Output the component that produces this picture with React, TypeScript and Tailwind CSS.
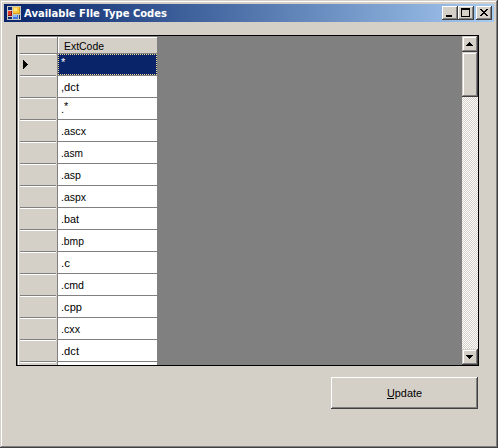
const codes = ['*', ',dct', '.*', '.ascx', '.asm', '.asp', '.aspx', '.bat', '.bmp', '.c', '.cmd', '.cpp', '.cxx', '.dct'];

const raised =
  'bg-[#d4d0c8] shadow-[inset_-1px_-1px_0_#404040,inset_1px_1px_0_#fff,inset_-2px_-2px_0_#808080]';
const scrollRaised =
  'bg-[#d4d0c8] shadow-[inset_-1px_-1px_0_#404040,inset_1px_1px_0_#d4d0c8,inset_-2px_-2px_0_#808080,inset_2px_2px_0_#fff]';

function AppIcon() {
  return (
    <svg width="16" height="16" viewBox="0 0 16 16" shapeRendering="crispEdges" className="ml-[3px]">
      <rect x="0" y="1" width="14" height="14" fill="#c8c8c4" />
      <rect x="1" y="2" width="4" height="3" fill="#102a70" />
      <rect x="1" y="6" width="4" height="5" fill="#901010" />
      <rect x="1" y="6" width="3" height="4" fill="#e03828" />
      <rect x="1" y="12" width="4" height="2" fill="#102a70" />
      <rect x="6" y="2" width="7" height="7" fill="#d99a14" />
      <rect x="6" y="2" width="6" height="6" fill="#f8c840" />
      <rect x="7" y="3" width="3" height="3" fill="#ffe47c" />
      <rect x="6" y="10" width="5" height="4" fill="#3f78dc" />
      <rect x="6" y="10" width="4" height="2" fill="#84b5fa" />
      <rect x="12" y="10" width="1" height="4" fill="#102a70" />
    </svg>
  );
}

function TitleBar() {
  return (
    <div className="flex h-[18px] items-center bg-linear-to-r from-[#0a246a] to-[#a6caf0] pr-[2px]">
      <AppIcon />
      <svg width="160" height="18" className="ml-px overflow-visible">
        <text x="0" y="13" textLength="143" lengthAdjust="spacingAndGlyphs" fill="#fff" className="font-['DejaVu_Sans',sans-serif] text-[11px] font-bold">
          Available FIle Type Codes
        </text>
      </svg>
      <div className="ml-auto flex">
        <button className={`h-[14px] w-4 ${raised}`}>
          <svg width="16" height="14" shapeRendering="crispEdges"><path d="M4 9h6v2H4z" /></svg>
        </button>
        <button className={`h-[14px] w-4 ${raised}`}>
          <svg width="16" height="14" shapeRendering="crispEdges"><path fillRule="evenodd" d="M3 2h9v9H3zM4 4v6h7V4z" /></svg>
        </button>
        <button className={`ml-[2px] h-[14px] w-4 ${raised}`}>
          <svg width="16" height="14" shapeRendering="crispEdges">
            <path d="M4 3h2v1h1v1h2V4h1V3h2v1h-1v1h-1v1H9v1h1v1h1v1h1v1h-2V9H9V8H7v1H6v1H4V9h1V8h1V7h1V6H6V5H5V4H4z" />
          </svg>
        </button>
      </div>
    </div>
  );
}

function Label({ text, width }: { text: string; width?: number }) {
  if (text.endsWith('*')) {
    return (
      <svg width="60" height="14" className="block overflow-visible">
        <text y="11" fill="currentColor">
          {text.slice(0, -1)}
          <tspan dy="-3">*</tspan>
        </text>
      </svg>
    );
  }
  return (
    <svg width="60" height="14" className="block overflow-visible">
      <text x="0" y="11" textLength={width} lengthAdjust="spacingAndGlyphs" fill="currentColor">{text}</text>
    </svg>
  );
}

const widths = [5, 18, 8, 25, 22, 20, 25, 18, 23, 9, 23, 21, 19, 18];

function Grid() {
  return (
    <div className="min-w-0 flex-1 overflow-hidden bg-[#808080]">
      <div className="flex h-[329px] w-[140px] border-t border-[#808080]">
        <div className="w-[2px] border-r border-white bg-[#808080]" />
        <div className="flex w-[38px] flex-col bg-[#d4d0c8] pl-px">
          <div className="h-[17px] shrink-0 border-b border-[#808080] shadow-[inset_0_1px_0_#fff]" />
          {codes.map((code, i) => (
            <div key={i} className="mr-px h-[22px] shrink-0 border-t border-b border-t-white border-b-[#808080]">
              {i === 0 && (
                <svg width="36" height="20" shapeRendering="crispEdges">
                  <path d="M3 5h1v1h1v1h1v1h1v1h1v1H7v1H6v1H5v1H4v1H3z" />
                </svg>
              )}
            </div>
          ))}
          <div className="mr-px h-[3px] shrink-0 border-t border-white" />
        </div>
        <div className="flex w-[100px] flex-col border-l border-[#808080] bg-white">
          <div className="h-[17px] shrink-0 border-b border-[#808080] bg-[#d4d0c8] pt-[2px] pl-[6px] shadow-[inset_1px_1px_0_#fff]">
            <Label text="ExtCode" width={40} />
          </div>
          {codes.map((code, i) => (
            <div key={i} className="h-[22px] shrink-0 border-b border-[#808080]">
              <div className={`h-[21px] ${i === 0 ? 'border border-dotted border-[#f5db95] bg-[#0a246a] pt-[3px] pl-[2px] text-white' : 'pt-1 pl-[3px]'}`}>
                <Label text={code} width={widths[i]} />
              </div>
            </div>
          ))}
        </div>
      </div>
    </div>
  );
}

function ScrollBar() {
  return (
    <div className="flex w-4 flex-col bg-white bg-[conic-gradient(#d4d0c8_25%,#fff_0_50%,#d4d0c8_0_75%,#fff_0)] bg-size-[2px_2px]">
      <button className={`h-4 ${scrollRaised}`}>
        <svg width="16" height="16" shapeRendering="crispEdges"><path d="M7 6h1v1h1v1h1v1h1v1H4V9h1V8h1V7h1z" /></svg>
      </button>
      <div className={`h-[45px] ${scrollRaised}`} />
      <button className={`mt-auto h-4 ${scrollRaised}`}>
        <svg width="16" height="16" shapeRendering="crispEdges"><path d="M4 6h7v1h-1v1H9v1H8v1H7V9H6V8H5V7H4z" /></svg>
      </button>
    </div>
  );
}

export default function App() {
  return (
    <div className="h-[448px] w-[498px] overflow-hidden bg-[#d4d0c8] p-1 font-['Liberation_Sans',Arial,sans-serif] text-[11px] leading-[14px] text-black shadow-[inset_-1px_-1px_0_#404040,inset_1px_1px_0_#d4d0c8,inset_-2px_-2px_0_#808080,inset_2px_2px_0_#fff]">
      <TitleBar />
      <div className="mt-[13px] ml-3 flex h-[331px] w-[463px] border border-black">
        <Grid />
        <ScrollBar />
      </div>
      <div className="mt-[11px] flex justify-end pr-4">
        <button className={`flex h-8 w-[147px] items-center justify-center ${raised}`}>
          <svg width="36" height="16" className="overflow-visible" shapeRendering="crispEdges">
            <text x="0" y="12" textLength="35" lengthAdjust="spacingAndGlyphs">Update</text>
            <path d="M0 13h7v1H0z" />
          </svg>
        </button>
      </div>
    </div>
  );
}
